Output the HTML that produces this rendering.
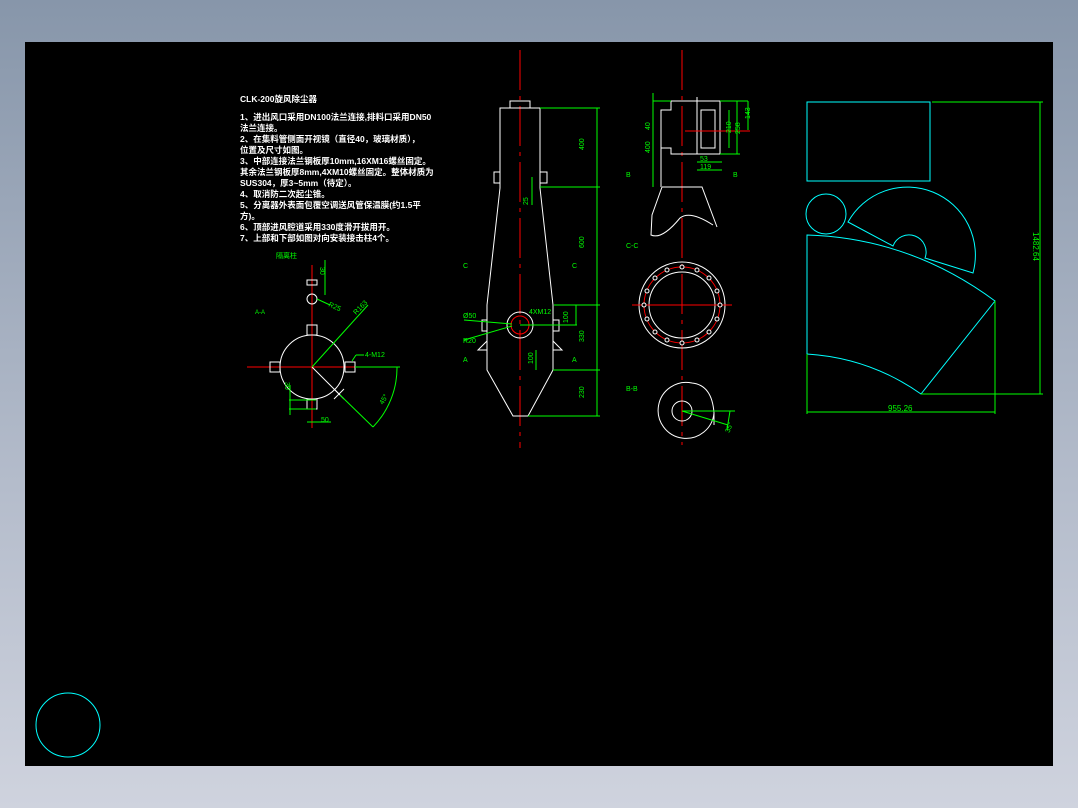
<!DOCTYPE html>
<html><head><meta charset="utf-8"><style>
html,body{margin:0;padding:0}
body{width:1078px;height:808px;background:linear-gradient(#8796aa,#b4bccb 60%,#cfd3de);position:relative;overflow:hidden;font-family:"Liberation Sans","Noto Sans CJK SC",sans-serif}
#c{position:absolute;left:25px;top:42px;width:1028px;height:724px;background:#000}
svg{position:absolute;left:0;top:0}
.t{position:absolute;color:#fff;font-size:8.5px;line-height:11px;font-weight:bold;left:240px;top:94px;white-space:nowrap;font-family:"Liberation Sans","Noto Sans CJK SC",sans-serif}
</style></head><body>
<div id="c"></div>
<div class="t">CLK-200旋风除尘器<div style="height:7px"></div>1、进出风口采用DN100法兰连接,排料口采用DN50<br>法兰连接。<br>2、在集料管侧面开视镜（直径40，玻璃材质），<br>位置及尺寸如图。<br>3、中部连接法兰钢板厚10mm,16XM16螺丝固定。<br>其余法兰钢板厚8mm,4XM10螺丝固定。整体材质为<br>SUS304，厚3~5mm（待定）。<br>4、取消防二次起尘锥。<br>5、分离器外表面包覆空调送风管保温膜(约1.5平<br>方)。<br>6、顶部进风腔道采用330度滑开拔用开。<br>7、上部和下部如图对向安装接击柱4个。</div>
<svg width="1078" height="808" viewBox="0 0 1078 808" fill="none" stroke-width="1">
<text x="276" y="258" fill="#0f0" font-size="7" stroke="none">隔离柱</text>
<text x="255" y="314" fill="#0f0" font-size="6" stroke="none">A-A</text>
<g stroke="#f00"><line x1="247" y1="367" x2="400" y2="367"/><line x1="312" y1="265" x2="312" y2="428"/></g>
<g stroke="#fff"><circle cx="312" cy="367" r="32"/><circle cx="312" cy="299" r="5"/><rect x="307" y="280" width="10" height="5"/>
<rect x="307" y="325" width="10" height="10"/><rect x="307" y="399" width="10" height="10"/><rect x="270" y="362" width="10" height="10"/><rect x="345" y="362" width="10" height="10"/>
<line x1="312" y1="367" x2="340" y2="395"/><line x1="334" y1="389" x2="344" y2="399"/><line x1="334" y1="399" x2="344" y2="389"/></g>
<g stroke="#0f0"><line x1="312" y1="367" x2="368" y2="305"/><line x1="340" y1="395" x2="373" y2="427"/><line x1="355" y1="367" x2="400" y2="367"/><path d="M397,367 A85,85 0 0 1 373,427"/>
<line x1="325" y1="260" x2="325" y2="295"/><line x1="289" y1="400" x2="316" y2="400"/><line x1="289" y1="409" x2="316" y2="409"/><line x1="290" y1="385" x2="290" y2="415"/><line x1="307" y1="422" x2="331" y2="422"/><line x1="317" y1="299" x2="330" y2="305"/><line x1="352" y1="361" x2="356" y2="355"/><line x1="356" y1="355" x2="364" y2="355"/></g>
<g fill="#0f0" stroke="none" font-size="7"><text x="320" y="267" transform="rotate(90 320 267)">30</text><text x="328" y="306" transform="rotate(25 328 306)">R25</text><text x="356" y="315" transform="rotate(-45 356 315)">R163</text><text x="365" y="357">4-M12</text><text x="321" y="422">50</text><text x="383" y="405" transform="rotate(-60 383 405)">45°</text><text x="285" y="382" transform="rotate(90 285 382)">30</text></g>
<line x1="520" y1="50" x2="520" y2="448" stroke="#f00" stroke-dasharray="40,6,4,6"/>
<g stroke="#fff"><rect x="510" y="101" width="20" height="7"/><path d="M500,108 H540 V188 L553,305 V370 L528,416 H513 L487,370 V305 L500,188 Z"/>
<rect x="494" y="172" width="6" height="11"/><rect x="540" y="172" width="7" height="11"/><rect x="482" y="320" width="5" height="11"/><rect x="553" y="320" width="6" height="11"/>
<path d="M487,341 L478,350 H487"/><path d="M553,341 L562,350 H553"/><circle cx="520" cy="325" r="13"/></g>
<circle cx="520" cy="325" r="9" stroke="#f00"/>
<g stroke="#0f0"><line x1="597" y1="108" x2="597" y2="416"/><line x1="540" y1="108" x2="600" y2="108"/><line x1="540" y1="187" x2="600" y2="187"/><line x1="554" y1="305" x2="600" y2="305"/><line x1="553" y1="370" x2="600" y2="370"/><line x1="528" y1="416" x2="600" y2="416"/><line x1="520" y1="325" x2="577" y2="325"/><line x1="576" y1="305" x2="576" y2="325"/><line x1="536" y1="350" x2="536" y2="370"/><line x1="464" y1="320" x2="512" y2="324"/><line x1="464" y1="340" x2="512" y2="326"/><line x1="532" y1="177" x2="532" y2="205"/></g>
<g fill="#0f0" stroke="none" font-size="7"><text x="592" y="142" transform="rotate(-90 592 150)">400</text><text x="592" y="240" transform="rotate(-90 592 248)">600</text><text x="592" y="334" transform="rotate(-90 592 342)">330</text><text x="592" y="390" transform="rotate(-90 592 398)">230</text><text x="524" y="201" transform="rotate(-90 528 201)">25</text><text x="529" y="314">4XM12</text><text x="463" y="318">Ø50</text><text x="463" y="343">R20</text><text x="565" y="312" transform="rotate(-90 572 316)">100</text><text x="533" y="356" transform="rotate(-90 537 360)">100</text><text x="463" y="268">C</text><text x="572" y="268">C</text><text x="463" y="362">A</text><text x="572" y="362">A</text></g>
<line x1="682" y1="50" x2="682" y2="445" stroke="#f00" stroke-dasharray="40,6,4,6"/>
<g stroke="#fff"><path d="M661,187 V110 H671 V101 H720 V154 H671 V148 H661"/><rect x="701" y="110" width="14" height="38"/><line x1="697" y1="97" x2="697" y2="154"/>
<path d="M662,187 H702 L717,227 M662,187 L652,215 L651,235 Q662,240 680,218 Q690,210 713,225"/>
<circle cx="682" cy="305" r="43"/><circle cx="682" cy="305" r="33"/>
<path d="M692,383 A28,28 0 1 0 714,413 V425 M692,383 Q712,385 714,413"/><circle cx="682" cy="411" r="10"/></g>
<line x1="685" y1="131" x2="750" y2="131" stroke="#f00"/><line x1="632" y1="305" x2="732" y2="305" stroke="#f00"/>
<circle cx="682" cy="305" r="38" stroke="#f00"/>
<g stroke="#fff" fill="#000"><circle cx="682" cy="267" r="2"/><circle cx="682" cy="343" r="2"/><circle cx="644" cy="305" r="2"/><circle cx="720" cy="305" r="2"/><circle cx="697" cy="270" r="2"/><circle cx="667" cy="270" r="2"/><circle cx="697" cy="340" r="2"/><circle cx="667" cy="340" r="2"/><circle cx="655" cy="278" r="2"/><circle cx="709" cy="278" r="2"/><circle cx="655" cy="332" r="2"/><circle cx="709" cy="332" r="2"/><circle cx="647" cy="291" r="2"/><circle cx="717" cy="291" r="2"/><circle cx="647" cy="319" r="2"/><circle cx="717" cy="319" r="2"/></g>
<g stroke="#0f0"><line x1="653" y1="93" x2="653" y2="187"/><line x1="653" y1="101" x2="671" y2="101"/><line x1="720" y1="101" x2="748" y2="101"/><line x1="720" y1="154" x2="740" y2="154"/><line x1="737" y1="101" x2="737" y2="154"/><line x1="729" y1="110" x2="729" y2="148"/><line x1="748" y1="101" x2="748" y2="130"/><line x1="697" y1="162" x2="722" y2="162"/><line x1="697" y1="170" x2="722" y2="170"/>
<line x1="682" y1="411" x2="735" y2="411"/><line x1="682" y1="411" x2="728" y2="425"/><path d="M730,411 L727,430"/></g>
<g fill="#0f0" stroke="none" font-size="7"><text x="645" y="125" transform="rotate(-90 650 125)">40</text><text x="645" y="148" transform="rotate(-90 650 148)">400</text><text x="725" y="127" transform="rotate(-90 731 127)">210</text><text x="733" y="127" transform="rotate(-90 740 127)">258</text><text x="744" y="113" transform="rotate(-90 750 113)">143</text><text x="700" y="161">53</text><text x="700" y="169">119</text><text x="626" y="248">C-C</text><text x="626" y="391">B-B</text><text x="626" y="177">B</text><text x="733" y="177">B</text><text x="723" y="432" transform="rotate(-70 727 428)">35°</text></g>
<g stroke="#0ff"><rect x="807" y="102" width="123" height="79"/><circle cx="826" cy="214" r="20"/>
<path d="M848,222 A68,68 0 0 1 973,273 L925,258 A16,16 0 0 0 893,246 Z"/>
<path d="M807,354 V235 Q910,238 995,301 L921,394 Q870,358 807,354"/></g>
<g stroke="#0f0"><line x1="932" y1="102" x2="1043" y2="102"/><line x1="1040" y1="102" x2="1040" y2="394"/><line x1="921" y1="394" x2="1043" y2="394"/><line x1="995" y1="301" x2="995" y2="414"/><line x1="807" y1="354" x2="807" y2="414"/><line x1="807" y1="412" x2="995" y2="412"/></g>
<g fill="#0f0" stroke="none" font-size="8"><text x="888" y="411">955.26</text><text x="1033" y="232" transform="rotate(90 1033 232)">1482.64</text></g>
<circle cx="68" cy="725" r="32" stroke="#0ff"/>
</svg>
</body></html>
